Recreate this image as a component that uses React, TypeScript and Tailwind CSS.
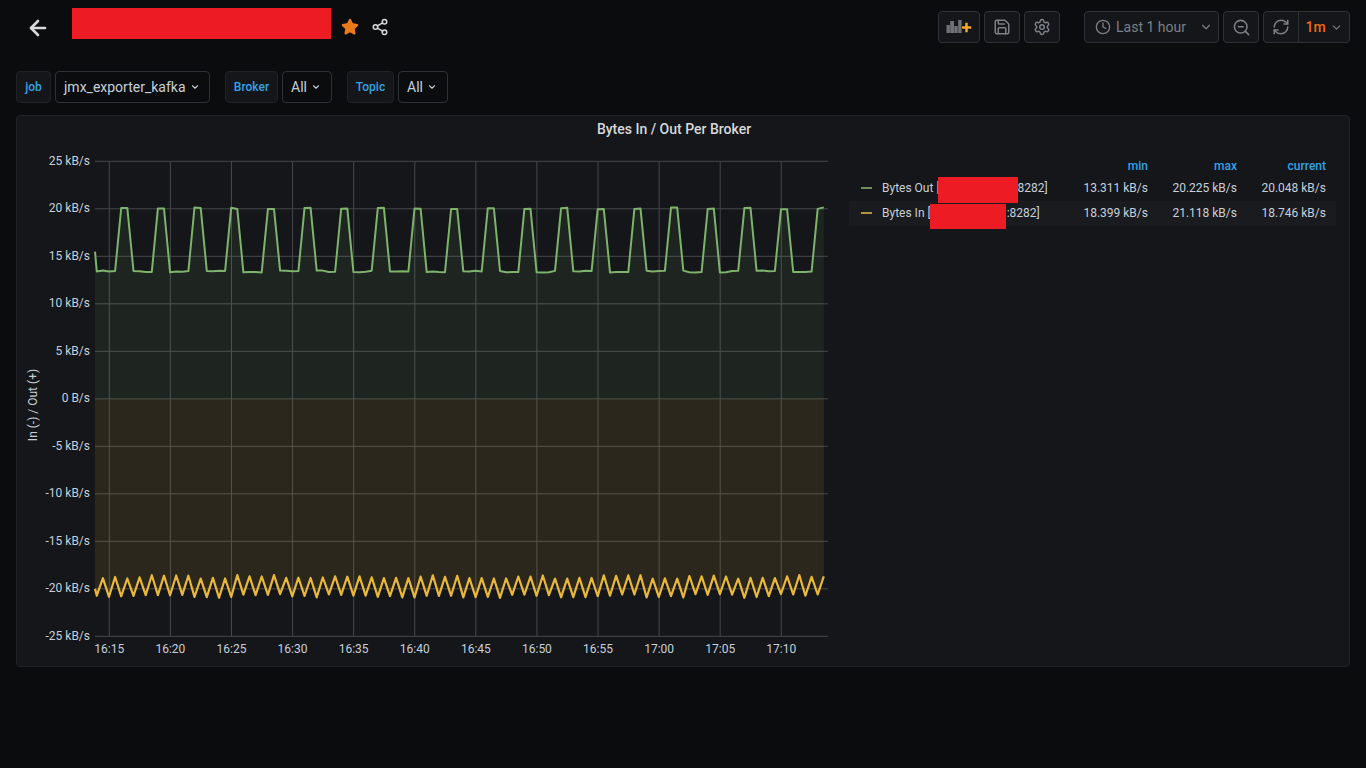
import { ArrowLeft, ChevronDown, Clock, RefreshCw, Save, Settings, Share2, Star, ZoomOut } from "lucide-react";

const ROBOTO = "font-['Roboto',_'Liberation_Sans',_sans-serif]";

const yTicks = [25, 20, 15, 10, 5, 0, -5, -10, -15, -20, -25];
const xTicks = ["16:15", "16:20", "16:25", "16:30", "16:35", "16:40", "16:45", "16:50", "16:55", "17:00", "17:05", "17:10"];

// chart sits at page x=16, y=150 so the numbers below are local to the svg
const OX = 17;
const OY = 150;
const toY = (v: number) => 398.8 - v * 9.5 - OY;
const toX = (i: number) => 96.8 + 6.109 * i - OX;

const noise = (i: number, amp: number) => Math.sin(i * 12.9898) * 43758.5453 % 1 * amp;

const greenPts: [number, number][] = [[95 - OX, toY(15.5)]];
const yellowPts: [number, number][] = [[95 - OX, toY(-20)]];
for (let i = 0; i < 120; i++) {
  const peak = i % 6 === 4 || i % 6 === 5;
  greenPts.push([toX(i), toY((peak ? 20.05 : 13.4) + noise(i, 0.1))]);
  yellowPts.push([toX(i), toY((i % 2 === 1 ? -18.75 : -20.75) + noise(i + 7, 0.2))]);
}

const line = (pts: [number, number][]) => pts.map((p) => `${p[0].toFixed(1)},${p[1].toFixed(1)}`).join(" ");
const area = (pts: [number, number][]) => `${line(pts)} ${pts[pts.length - 1][0].toFixed(1)},${toY(0)} ${pts[0][0].toFixed(1)},${toY(0)}`;

const Chart = () => (
  <svg width="817" height="516" className="block shrink-0">
    {yTicks.map((v) => (
      <g key={v}>
        <line x1={95 - OX} x2={828 - OX} y1={toY(v)} y2={toY(v)} stroke="#46484c" />
        <text x={90 - OX} y={toY(v) + 3.5} textAnchor="end" fontSize="12" fill="#c7d0d9">
          {v === 0 ? "0 B/s" : `${v} kB/s`}
        </text>
      </g>
    ))}
    {xTicks.map((t, i) => {
      const x = 109.3 + i * 61.09 - OX;
      return (
        <g key={t}>
          <line x1={x} x2={x} y1={toY(25)} y2={toY(-25)} stroke="#46484c" />
          <text x={x} y={503} textAnchor="middle" fontSize="12" fill="#c7d0d9">
            {t}
          </text>
        </g>
      );
    })}
    <text transform={`translate(20 ${405 - OY}) rotate(-90)`} textAnchor="middle" fontSize="12" fill="#c7d0d9">
      In (-) / Out (+)
    </text>
    <polygon points={area(greenPts)} fill="#7eb26d" fillOpacity="0.1" />
    <polygon points={area(yellowPts)} fill="#eab839" fillOpacity="0.11" />
    <polyline points={line(greenPts)} fill="none" stroke="#7eb26d" strokeWidth="2" strokeLinejoin="round" />
    <polyline points={line(yellowPts)} fill="none" stroke="#eab839" strokeWidth="2.2" strokeLinejoin="round" />
  </svg>
);

const AddPanelIcon = () => (
  <svg width="26" height="16" viewBox="0 0 26 16">
    <rect x="0.5" y="6" width="3.4" height="8" fill="#6e7278" />
    <rect x="4.2" y="2" width="3.8" height="12" fill="#6e7278" />
    <rect x="8.3" y="7" width="3.4" height="7" fill="#6e7278" />
    <rect x="12.2" y="1" width="3.4" height="13" fill="#6e7278" />
    <path d="M19 3.5h3v3.5h3.5v3H22v3.5h-3V10h-3.5V7H19z" fill="#f5a623" stroke="#0b0c0e" strokeWidth="0.5" />
  </svg>
);

const ToolButton = ({ className, children }: { className: string; children: React.ReactNode }) => (
  <div className={`h-8 flex items-center justify-center bg-[#141619] border border-[#2c3235] rounded-sm text-[#7b8087] ${className}`}>
    {children}
  </div>
);

const VarLabel = ({ text, className }: { text: string; className: string }) => (
  <div className={`h-8 flex items-center justify-center bg-[#141619] border border-[#202226] rounded-sm text-xs font-medium text-[#33a2e5] ${className}`}>
    {text}
  </div>
);

const VarSelect = ({ text, className }: { text: string; className: string }) => (
  <div className={`h-8 flex items-center pl-2 bg-[#0b0c0e] border border-[#2c3235] rounded-sm text-sm text-[#c7d0d9] ${className}`}>
    {text}
    <ChevronDown size={10} strokeWidth={2.6} className="ml-1" />
  </div>
);

const rows = [
  { color: "#6f8f5f", pre: "Bytes Out [", gap: "w-[75px]", mask: "-left-[2px] w-[80px] -top-[10px] h-[26px]", post: ":8282]", min: "13.311 kB/s", max: "20.225 kB/s", cur: "20.048 kB/s", bg: "" },
  { color: "#b5933a", pre: "Bytes In [", gap: "w-[76px]", mask: "-left-[1px] w-[76px] -top-[8px] h-[25px]", post: ":8282]", min: "18.399 kB/s", max: "21.118 kB/s", cur: "18.746 kB/s", bg: "bg-[#191b1e]" },
];

const Legend = () => (
  <div className="w-[487px] mt-[8px] ml-[15px] text-xs text-[#c7d0d9]">
    <div className="h-[15px] flex justify-end items-center pr-[10px] font-medium text-[#33a2e5]">
      <span className="w-[89px] text-right">min</span>
      <span className="w-[89px] text-right">max</span>
      <span className="w-[89px] text-right">current</span>
    </div>
    <div className="mt-[3px]">
      {rows.map((r) => (
        <div key={r.pre} className={`h-[25px] pb-[2px] flex items-center pr-[10px] ${r.bg}`}>
          <span className="w-[11px] h-[2px] ml-3 mr-[10px]" style={{ backgroundColor: r.color }} />
          <span className="flex-1 flex items-center whitespace-nowrap">
            {r.pre}
            <span className={`relative inline-block h-[1px] ${r.gap}`}>
              <span className={`absolute bg-[#ed1c24] ${r.mask}`} />
            </span>
            {r.post}
          </span>
          <span className="w-[89px] text-right">{r.min}</span>
          <span className="w-[89px] text-right">{r.max}</span>
          <span className="w-[89px] text-right">{r.cur}</span>
        </div>
      ))}
    </div>
  </div>
);

export default function App() {
  return (
    <div className={`w-[1366px] h-[768px] overflow-hidden bg-[#0b0c0e] text-[#c7d0d9] ${ROBOTO}`}>
      {/* top bar */}
      <div className="h-[71px] pt-2 pl-[26px] pr-4 flex items-start">
        <ArrowLeft size={24} strokeWidth={2.6} className="mt-2 text-[#d8d9da]" />
        <div className="ml-[22px] w-[259px] h-[31px] bg-[#ed1c24]" />
        <Star size={18} fill="#eb7b18" stroke="#eb7b18" className="ml-[10px] mt-[10px]" />
        <Share2 size={18} className="ml-[12px] mt-[10px] text-[#d8d9da]" />
        <div className="ml-auto mt-[3px] flex">
          <ToolButton className="w-[42px]"><AddPanelIcon /></ToolButton>
          <ToolButton className="w-9 ml-1"><Save size={18} /></ToolButton>
          <ToolButton className="w-9 ml-1"><Settings size={18} /></ToolButton>
          <ToolButton className="w-[135px] ml-6 justify-start pl-[10px] text-sm text-[#7b8087]">
            <Clock size={16} />
            <span className="ml-[5px]">Last 1 hour</span>
            <ChevronDown size={14} className="ml-auto mr-[5px]" />
          </ToolButton>
          <ToolButton className="w-9 ml-1"><ZoomOut size={19} /></ToolButton>
          <ToolButton className="w-[36px] ml-1 rounded-r-none"><RefreshCw size={18} /></ToolButton>
          <ToolButton className="w-[52px] -ml-px rounded-l-none text-sm font-medium text-[#f5670f]">
            1m
            <ChevronDown size={13} className="ml-1 text-[#7b8087]" />
          </ToolButton>
        </div>
      </div>

      {/* template variables */}
      <div className="h-8 pl-4 flex">
        <VarLabel text="job" className="w-[35px]" />
        <VarSelect text="jmx_exporter_kafka" className="w-[155px] ml-1" />
        <VarLabel text="Broker" className="w-[53px] ml-[15px]" />
        <VarSelect text="All" className="w-[50px] ml-1" />
        <VarLabel text="Topic" className="w-[47px] ml-[15px]" />
        <VarSelect text="All" className="w-[50px] ml-1" />
      </div>

      {/* panel */}
      <div className="mt-3 mx-4 h-[552px] bg-[#141619] border border-[#202226] rounded-sm">
        <div className="h-[34px] pt-[3px] pr-[18px] text-center text-sm font-medium text-[#d8d9da]">Bytes In / Out Per Broker</div>
        <div className="flex">
          <Chart />
          <Legend />
        </div>
      </div>
    </div>
  );
}
